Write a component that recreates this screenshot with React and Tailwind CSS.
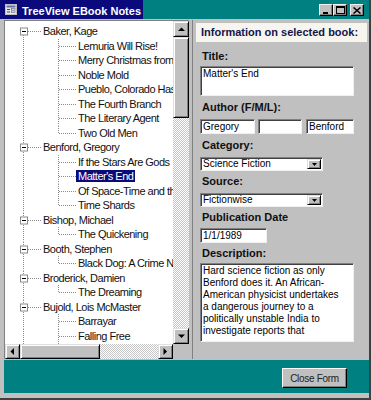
import React from "react";

const TREE = [
  {
    name: "Baker, Kage",
    books: [
      "Lemuria Will Rise!",
      "Merry Christmas from Navarro Lodge, 1928",
      "Noble Mold",
      "Pueblo, Colorado Has the Answer",
      "The Fourth Branch",
      "The Literary Agent",
      "Two Old Men",
    ],
  },
  {
    name: "Benford, Gregory",
    books: ["If the Stars Are Gods", "Matter's End", "Of Space-Time and the River", "Time Shards"],
  },
  { name: "Bishop, Michael", books: ["The Quickening"] },
  { name: "Booth, Stephen", books: ["Black Dog: A Crime Novel"] },
  { name: "Broderick, Damien", books: ["The Dreaming"] },
  { name: "Bujold, Lois McMaster", books: ["Barrayar", "Falling Free"], more: true },
];

const SELECTED = "Matter's End";

const DESCRIPTION = [
  "Hard science fiction as only",
  "Benford does it. An African-",
  "American physicist undertakes",
  "a dangerous journey to a",
  "politically unstable India to",
  "investigate reports that",
];

const DOT = "#8a8a8a";

const RootLines = ({ first }) => (
  <svg width="36" height="14.5" viewBox="0 0 36 14.5" className="shrink-0">
    <line x1="18.5" y1={first ? 7 : 0} x2="18.5" y2="14.5" stroke={DOT} strokeDasharray="1 1" />
    <line x1="23" y1="7.5" x2="36" y2="7.5" stroke={DOT} strokeDasharray="1 1" />
    <rect x="15.5" y="4" width="7" height="7" fill="#fff" stroke="#8a8a8a" />
    <line x1="17" y1="7.5" x2="21" y2="7.5" stroke="#000" />
  </svg>
);

const ChildLines = ({ last }) => (
  <svg width="71" height="14.5" viewBox="0 0 71 14.5" className="shrink-0">
    <line x1="18.5" y1="0" x2="18.5" y2="14.5" stroke={DOT} strokeDasharray="1 1" />
    <line x1="53.5" y1="0" x2="53.5" y2={last ? 7.5 : 14.5} stroke={DOT} strokeDasharray="1 1" />
    <line x1="54" y1="7.5" x2="71" y2="7.5" stroke={DOT} strokeDasharray="1 1" />
  </svg>
);

const Bevel = ({ className = "", children }) => (
  <div
    className={`flex items-center justify-center bg-[#c0c0c0] border border-t-[#dfdfdf] border-l-[#dfdfdf] border-r-black border-b-black shadow-[inset_1px_1px_0_#fff,inset_-1px_-1px_0_#808080] ${className}`}
  >
    {children}
  </div>
);

const Arrow = ({ dir }) => {
  const pts = {
    up: "0,4 7,4 3.5,0.5",
    down: "0,0.5 7,0.5 3.5,4",
    left: "4,0 4,7 0.5,3.5",
    right: "0.5,0 0.5,7 4,3.5",
  }[dir];
  const vertical = dir === "up" || dir === "down";
  return (
    <svg width={vertical ? 7 : 5} height={vertical ? 5 : 7} viewBox={vertical ? "0 0 7 5" : "0 0 5 7"}>
      <polygon points={pts} fill="#000" />
    </svg>
  );
};

const Track = ({ className = "" }) => (
  <div className={`bg-[repeating-conic-gradient(#ffffff_0_25%,#c6c6c6_0_50%)] bg-[length:2px_2px] ${className}`} />
);

const Field = ({ className = "", children }) => (
  <div
    className={`bg-white border border-t-[#808080] border-l-[#808080] border-r-[#f0f0f0] border-b-[#f0f0f0] shadow-[inset_1px_1px_0_#404040] overflow-hidden text-[10px] leading-[12px] text-black pl-[2px] pt-[1px] whitespace-nowrap ${className}`}
  >
    {children}
  </div>
);

const Combo = ({ value, className = "" }) => (
  <div
    className={`flex bg-white border border-t-[#808080] border-l-[#808080] border-r-[#f0f0f0] border-b-[#f0f0f0] shadow-[inset_1px_1px_0_#404040] ${className}`}
  >
    <div className="flex-1 text-[10px] leading-[12px] pl-[2px] whitespace-nowrap overflow-hidden">{value}</div>
    <Bevel className="w-[14px] m-[1px] ml-0">
      <svg width="5" height="3" viewBox="0 0 5 3">
        <polygon points="0,0 5,0 2.5,3" fill="#000" />
      </svg>
    </Bevel>
  </div>
);

const Label = ({ children, className = "" }) => (
  <div className={`h-[14px] leading-[14px] pl-[2px] text-[11px] font-bold text-[#101010] whitespace-nowrap ${className}`}>
    {children}
  </div>
);

const TitleButton = ({ children, className = "" }) => (
  <div
    className={`w-[14px] h-[12px] flex items-center justify-center bg-[#c0c0c0] border border-t-[#f0f0f0] border-l-[#f0f0f0] border-r-black border-b-black shadow-[inset_-1px_-1px_0_#808080] ${className}`}
  >
    {children}
  </div>
);

export default function App() {
  const rows = [];
  TREE.forEach((author, ai) => {
    rows.push(
      <div key={author.name} className="h-[14.5px] flex items-center">
        <RootLines first={ai === 0} />
        <span className="px-[2px] leading-[12px]">{author.name}</span>
      </div>
    );
    author.books.forEach((book, bi) => {
      const last = bi === author.books.length - 1 && !author.more;
      const sel = book === SELECTED;
      rows.push(
        <div key={author.name + book} className="h-[14.5px] flex items-center">
          <ChildLines last={last} />
          <span className={`px-[2px] h-[12px] leading-[12px] ${sel ? "bg-[#0a0a78] text-white" : ""}`}>{book}</span>
        </div>
      );
    });
  });

  return (
    <div className="w-[371px] h-[400px] bg-[#c0c0c0] flex flex-col border-r-2 border-r-[#404040] font-['Liberation_Sans',Arial,sans-serif] overflow-hidden select-none">
      {/* title bar */}
      <div className="h-[19px] flex shrink-0">
        <div className="w-[143px] bg-[#0a0a7c] flex items-center pl-[5px] gap-[5px]">
          <svg width="12" height="11" viewBox="0 0 12 11">
            <rect x="0.5" y="0.5" width="11" height="10" fill="#e8e8e8" stroke="#c0c0c0" />
            <rect x="1.5" y="1.5" width="9" height="2" fill="#6070a0" />
            <line x1="2" y1="5.5" x2="5" y2="5.5" stroke="#404060" />
            <line x1="2" y1="8" x2="5" y2="8" stroke="#404060" />
            <rect x="6.5" y="4.5" width="3.5" height="1.5" fill="#fff" stroke="#606080" strokeWidth="0.6" />
            <rect x="6.5" y="7" width="3.5" height="1.5" fill="#fff" stroke="#606080" strokeWidth="0.6" />
          </svg>
          <span className="text-white text-[11px] font-bold whitespace-nowrap leading-[12px] mt-[2px]">
            TreeView EBook Notes
          </span>
        </div>
        <div className="flex-1 bg-[#008080] flex items-center justify-end pr-[5px] pt-[1px]">
          <TitleButton>
            <svg width="6" height="8" viewBox="0 0 6 8">
              <rect x="0" y="6" width="5" height="2" fill="#000" />
            </svg>
          </TitleButton>
          <TitleButton>
            <svg width="9" height="8" viewBox="0 0 9 8">
              <rect x="0.5" y="0.5" width="8" height="7" fill="none" stroke="#000" />
              <line x1="0" y1="1.5" x2="9" y2="1.5" stroke="#000" />
            </svg>
          </TitleButton>
          <TitleButton className="ml-[3px]">
            <svg width="8" height="7" viewBox="0 0 8 7">
              <path d="M0.5 0.5 L7.5 6.5 M7.5 0.5 L0.5 6.5" stroke="#000" strokeWidth="1.5" />
            </svg>
          </TitleButton>
        </div>
      </div>

      {/* body */}
      <div className="h-[339px] mt-[1px] flex pl-[4px] shrink-0">
        {/* tree view */}
        <div className="w-[185px] flex flex-col border-l border-t border-[#808080]">
          <div className="flex-1 flex min-h-0">
            <div className="flex-1 bg-white overflow-hidden pt-[3px] text-[11px] tracking-[-0.5px] text-[#111] whitespace-nowrap">
              {rows}
              <div className="h-[14.5px] flex">
                <ChildLines last={false} />
              </div>
            </div>
            <div className="w-[16px] flex flex-col">
              <Bevel className="h-[16px] shrink-0">
                <Arrow dir="up" />
              </Bevel>
              <Bevel className="h-[81px] shrink-0" />
              <Track className="flex-1" />
              <Bevel className="h-[16px] shrink-0">
                <Arrow dir="down" />
              </Bevel>
            </div>
          </div>
          <div className="h-[15px] flex shrink-0">
            <Bevel className="w-[15px] shrink-0">
              <Arrow dir="left" />
            </Bevel>
            <Bevel className="w-[80px] shrink-0" />
            <Track className="flex-1" />
            <Bevel className="w-[15px] shrink-0">
              <Arrow dir="right" />
            </Bevel>
            <div className="w-[16px] bg-[#c0c0c0]" />
          </div>
        </div>

        {/* details panel */}
        <div className="w-[177px] ml-[3px] pt-[3px] pl-[3px] pr-[2px] border-l border-[#808080]">
          <div className="h-[19px] bg-[#f6f6ee] flex items-center pl-[5px] text-[11px] font-bold text-[#141450] whitespace-nowrap">
            Information on selected book:
          </div>
          <div className="pl-[4px]">
            <Label className="mt-[7px]">Title:</Label>
            <Field className="mt-[3px] h-[30px] w-[154px]">Matter's End</Field>

            <Label className="mt-[4px]">Author (F/M/L):</Label>
            <div className="mt-[5px] flex">
              <Field className="h-[15px] w-[55px]">Gregory</Field>
              <Field className="h-[15px] w-[44px] ml-[3px]" />
              <Field className="h-[15px] w-[48px] ml-[4px]">Benford</Field>
            </div>

            <Label className="mt-[4px]">Category:</Label>
            <Combo className="mt-[5px] h-[14px] w-[123px]" value="Science Fiction" />

            <Label className="mt-[3px]">Source:</Label>
            <Combo className="mt-[5px] h-[14px] w-[123px]" value="Fictionwise" />

            <Label className="mt-[3px]">Publication Date</Label>
            <Field className="mt-[4px] h-[15px] w-[67px]">1/1/1989</Field>

            <Label className="mt-[3px]">Description:</Label>
            <Field className="mt-[3px] h-[79px] w-[154px] leading-[11.8px]">
              {DESCRIPTION.map((line) => (
                <div key={line}>{line}</div>
              ))}
            </Field>
          </div>
        </div>
      </div>

      {/* footer */}
      <div className="h-[33px] mt-[1px] ml-[4px] bg-[#008080] flex justify-end items-start pt-[8px] pr-[22px] shrink-0">
        <div className="w-[65px] h-[20px] flex items-center justify-center bg-[#c0c0c0] border border-t-white border-l-white border-r-black border-b-black shadow-[inset_-1px_-1px_0_#808080] text-[10px] tracking-[-0.3px] text-[#222]">
          Close Form
        </div>
      </div>
      <div className="flex-1 border-b-2 border-b-[#404040]" />
    </div>
  );
}
